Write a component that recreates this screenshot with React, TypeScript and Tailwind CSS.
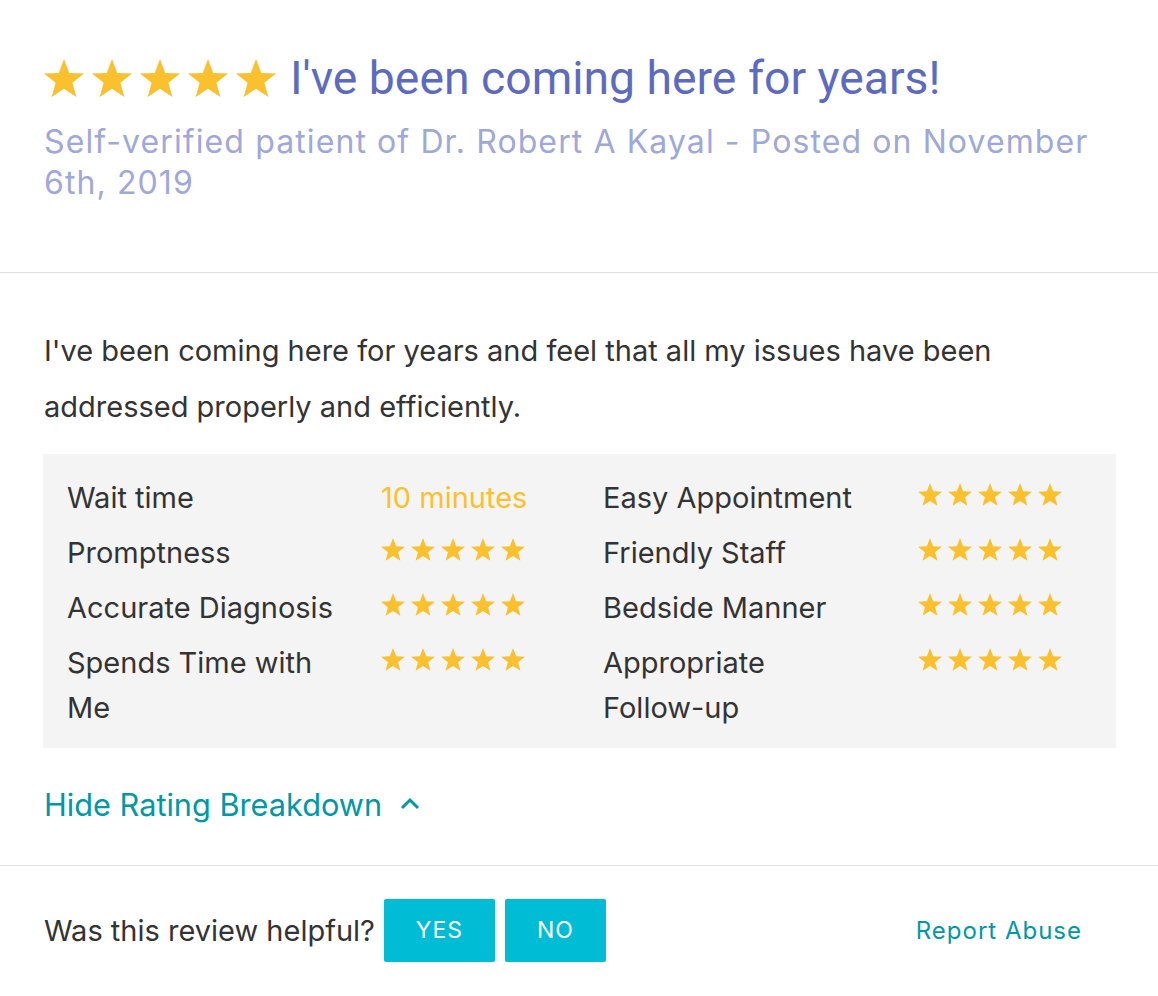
import React from "react";

const Star = ({ w }: { w: number }) => (
  <svg width={w} height={(w * 23) / 24} viewBox="0 0 24 23" className="shrink-0">
    <path
      d="M12 0 L15.12 8.33 L24 8.72 L17.04 14.26 L19.42 22.83 L12 17.92 L4.58 22.83 L6.96 14.26 L0 8.72 L8.88 8.33 Z"
      fill="#fbc02d"
    />
  </svg>
);

const Stars = () => (
  <div className="h-[45px] pb-[6px] flex items-center gap-[6px]">
    {[0, 1, 2, 3, 4].map((i) => (
      <Star key={i} w={24} />
    ))}
  </div>
);

const rows: [React.ReactNode, React.ReactNode, React.ReactNode][] = [
  ["Wait time", <span className="text-[#fbc02d]">10 minutes</span>, "Easy Appointment"],
  ["Promptness", null, "Friendly Staff"],
  ["Accurate Diagnosis", null, "Bedside Manner"],
  [
    "Spends Time with Me",
    null,
    <>
      Appropriate <span className="whitespace-nowrap">Follow-up</span>
    </>,
  ],
];

export default function App() {
  return (
    <div
      className="w-[1158px] min-h-[996px] bg-white text-[#333333]"
      style={{ fontFamily: "Inter, Roboto, 'Liberation Sans', sans-serif" }}
    >
      {/* Header */}
      <div className="px-[44px] pt-[50px] pb-[69px] border-b border-[#e0e0e0]">
        <div className="flex items-center gap-[14px] h-[56px]">
          <div className="flex items-center gap-[8px]">
            {[0, 1, 2, 3, 4].map((i) => (
              <Star key={i} w={40} />
            ))}
          </div>
          <h1
            className="text-[46.3px] leading-[56px] text-[#5c6bc0] font-normal whitespace-nowrap"
            style={{ fontFamily: "Roboto, sans-serif" }}
          >
            I've been coming here for years!
          </h1>
        </div>
        <p className="mt-[15px] text-[32px] leading-[41px] tracking-[1.1px] text-[#9fa8da]">
          Self-verified patient of Dr. Robert A Kayal - Posted on November 6th, 2019
        </p>
      </div>

      {/* Body */}
      <div className="pl-[44px] pr-[42px] pt-[50px]">
        <p className="text-[29px] leading-[56px] pr-[40px]">
          I've been coming here for years and feel that all my issues have been addressed properly and efficiently.
        </p>

        <div className="mt-[19px] -ml-[1px] bg-[#f4f4f4] pl-[24px] pr-[20px] pt-[21px] pb-[18px]">
          <div className="grid grid-cols-[280px_256px_280px_1fr] gap-y-[10px] text-[29px] leading-[45px]">
            {rows.map(([l, v, r], idx) => (
              <React.Fragment key={idx}>
                <div>{l}</div>
                <div className="pl-[34px]">{v ?? <Stars />}</div>
                <div>{r}</div>
                <div className="pl-[35px]">
                  <Stars />
                </div>
              </React.Fragment>
            ))}
          </div>
        </div>

        <div className="mt-[34px] pb-[38px] flex items-center gap-[18px] text-[30.7px] leading-[45px] text-[#0097a7]">
          <span>Hide Rating Breakdown</span>
          <svg width="20" height="13" viewBox="0 0 20 13" className="mb-[2px]">
            <path d="M2 11 L10 3 L18 11" fill="none" stroke="#0097a7" strokeWidth="3" />
          </svg>
        </div>
      </div>

      {/* Footer */}
      <div className="border-t border-[#e0e0e0] pl-[44px] pr-[76px] py-[33px] flex items-center">
        <span className="text-[29px] leading-[40px]">Was this review helpful?</span>
        <button className="ml-[9px] w-[111px] h-[63px] rounded-[2px] bg-[#00bcd4] text-white text-[23px] tracking-[1px]">
          YES
        </button>
        <button className="ml-[10px] w-[101px] h-[63px] rounded-[2px] bg-[#00bcd4] text-white text-[23px] tracking-[1px]">
          NO
        </button>
        <span className="ml-auto text-[24px] tracking-[1px] text-[#0097a7]">Report Abuse</span>
      </div>
    </div>
  );
}
